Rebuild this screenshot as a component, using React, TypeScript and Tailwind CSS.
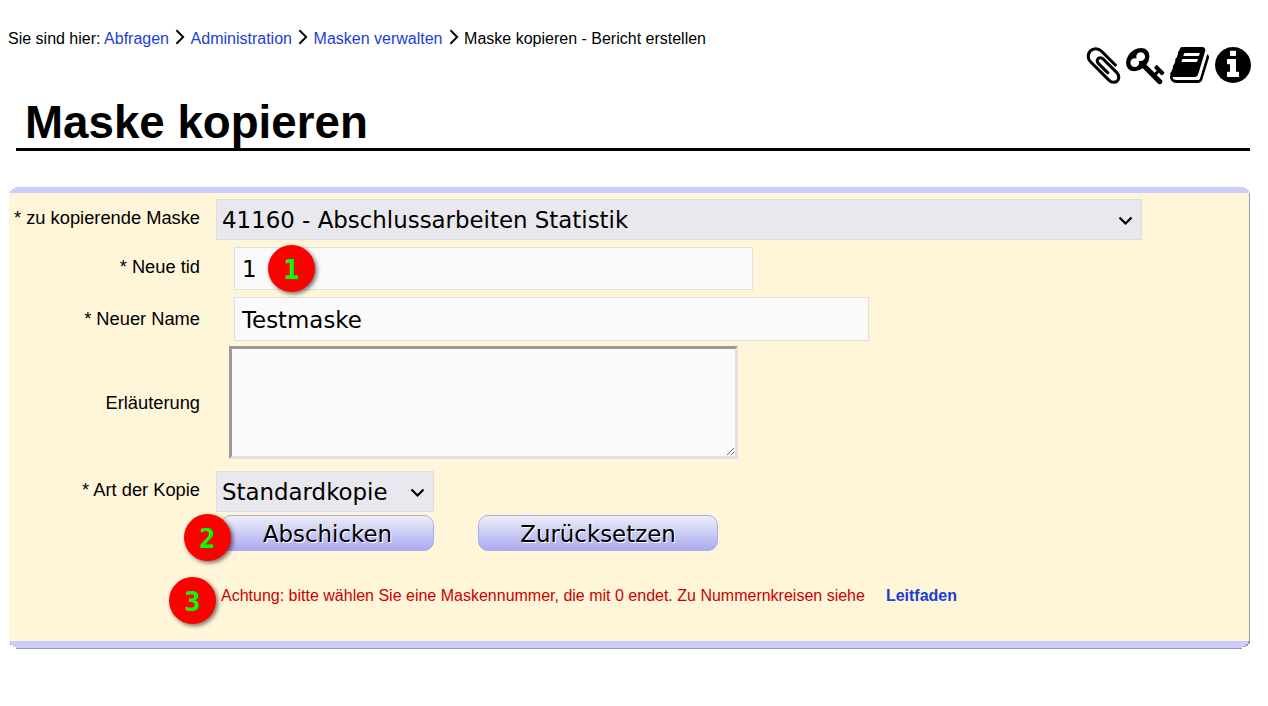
const ui = "font-['DejaVu_Sans',sans-serif] text-[22.9px] leading-normal text-black";

function Chevron() {
  return (
    <svg className="mx-[5px] inline-block h-[16px] w-[11.6px] align-[-1px]" viewBox="0 0 12 16" fill="none" stroke="#000" strokeWidth="2">
      <path d="M2.500 1l7 7-7 7" />
    </svg>
  );
}

function Badge({ n, className }: { n: number; className: string }) {
  return (
    <span
      className={`absolute z-10 flex h-[47px] w-[47px] items-center justify-center rounded-full bg-[#ff0000] pt-[3px] font-['DejaVu_Sans_Mono',monospace] text-[27px] font-bold text-[#00ff00] shadow-[2px_2px_4px_rgba(0,0,0,0.55)] ${className}`}
    >
      {n}
    </span>
  );
}

function Label({ children, className = "pb-[3px]" }: { children: string; className?: string }) {
  return <label className={`w-[207px] shrink-0 pr-[16px] text-right text-[18.3px] ${className}`}>{children}</label>;
}

function Select({ value, className }: { value: string; className: string }) {
  return (
    <div className={`relative ${className}`}>
      <select
        defaultValue={value}
        className={`h-full w-full appearance-none border border-[#dddddd] bg-[#e8e8ee] pl-[5px] pt-[2px] ${ui}`}
      >
        <option>{value}</option>
      </select>
      <svg className="pointer-events-none absolute right-[9px] top-[17px] h-[9px] w-[15px]" viewBox="0 0 15 9" fill="none" stroke="#000" strokeWidth="2.2">
        <path d="M1.500 1.500l6 6 6-6" />
      </svg>
    </div>
  );
}

const actionIcons = [
  {
    title: "Anhang",
    box: "h-[43px] w-[43px] mr-[1px]",
    d: "M1596 1385q0 117-79 196t-196 79q-135 0-235-100l-777-776q-113-115-113-271 0-159 110-270t269-111q158 0 273 113l605 606q10 10 10 22 0 16-30.5 46.5t-46.5 30.5q-13 0-23-10l-606-607q-79-77-181-77-106 0-179 75t-73 181q0 105 76 181l776 777q63 63 145 63 64 0 106-42t42-106q0-82-63-145l-581-581q-26-24-60-24-29 0-48 19t-19 48q0 32 25 59l410 410q10 10 10 22 0 16-31 47t-47 31q-12 0-22-10l-410-410q-63-61-63-149 0-82 57-139t139-57q88 0 149 63l581 581q100 98 100 235z",
  },
  {
    title: "Rechte",
    box: "h-[41px] w-[41px]",
    d: "M832 512q0-80-56-136t-136-56-136 56-56 136q0 42 19 83-41-19-83-19-80 0-136 56t-56 136 56 136 136 56 136-56 56-136q0-42-19-83 41 19 83 19 80 0 136-56t56-136zm851 704q0 17-49 66t-66 49q-9 0-28.500-16t-36.500-33-38.500-40-24.500-26l-96 96 220 220q28 28 28 68 0 42-39 81t-81 39q-40 0-68-28l-671-671q-176 131-365 131-163 0-265.500-102.500t-102.500-265.500q0-160 95-313t248-248 313-95q163 0 265.500 102.500t102.500 265.500q0 189-131 365l355 355 96-96q-3-3-26-24.500t-40-38.500-33-36.500-16-28.500q0-17 49-66t66-49q13 0 23 10 6 6 46 44.500t82 79.500 86.500 86 73 78 28.500 41z",
  },
  {
    title: "Handbuch",
    box: "h-[42px] w-[42px] ml-[3.5px]",
    d: "M1639 478q40 57 18 129l-275 906q-19 64-76.500 107.500t-122.500 43.500h-923q-77 0-148.500-53.500t-99.500-131.500q-24-67-2-127 0-4 3-27t4-37q1-8-3-21.500t-3-19.500q2-11 8-21t16.500-23.500 16.500-23.500q23-38 45-91.500t30-91.500q3-10 .5-30t-.5-28q3-11 17-28t17-23q21-36 42-92t25-90q1-9-2.500-32t.5-28q4-13 22-30.500t22-22.500q19-26 42.500-84.500t27.500-96.500q1-8-3-25.500t-2-26.500q2-8 9-18t18-23 17-21q8-12 16.500-30.500t15-35 16-36 19.500-32 26.500-23.500 36-11.500 47.500 5.500l-1 3q38-9 51-9h761q74 0 114 56t18 130l-274 906q-36 119-71.500 153.500t-128.500 34.500h-869q-27 0-38 15-11 16-1 43 24 70 144 70h923q29 0 56-15.500t35-41.500l300-987q7-22 5-57 38 15 59 43zm-1064 2q-4 13 2 22.500t20 9.500h608q13 0 25.500-9.500t16.500-22.500l21-64q4-13-2-22.500t-20-9.500h-608q-13 0-25.500 9.500t-16.500 22.500zm-83 256q-4 13 2 22.500t20 9.500h608q13 0 25.500-9.500t16.500-22.500l21-64q4-13-2-22.500t-20-9.500h-608q-13 0-25.500 9.500t-16.500 22.500z",
  },
  {
    title: "Info",
    box: "h-[42px] w-[42px]",
    d: "M1152 1376v-160q0-14-9-23t-23-9h-96v-512q0-14-9-23t-23-9h-320q-14 0-23 9t-9 23v160q0 14 9 23t23 9h96v320h-96q-14 0-23 9t-9 23v160q0 14 9 23t23 9h448q14 0 23-9t9-23zm-128-896v-160q0-14-9-23t-23-9h-192q-14 0-23 9t-9 23v160q0 14 9 23t23 9h192q14 0 23-9t9-23zm640 416q0 209-103 385.500t-279.500 279.500-385.500 103-385.500-103-279.500-279.500-103-385.500 103-385.500 279.500-279.500 385.500-103 385.500 103 279.500 279.500 103 385.500z",
  },
];

export default function App() {
  return (
    <div className="min-h-[706px] bg-white pt-[29px] font-['Liberation_Sans',Arial,sans-serif] text-[16px] leading-[18px] text-black">
      {/* Brotkrumen */}
      <div className="pl-[8px]">
        Sie sind hier: <a className="text-[#1a3fd6]">Abfragen</a>
        <Chevron />
        <a className="text-[#1a3fd6]">Administration</a>
        <Chevron />
        <a className="text-[#1a3fd6]">Masken verwalten</a>
        <Chevron />
        Maske kopieren - Bericht erstellen
      </div>

      <div className="flex h-[36px] items-center justify-end pb-[2px] pr-[14px]">
        {actionIcons.map((icon) => (
          <svg key={icon.title} className={`shrink-0 ${icon.box}`} viewBox="0 0 1792 1792" fill="#000" aria-label={icon.title}>
            <path d={icon.d} />
          </svg>
        ))}
      </div>

      <h1 className="ml-[16px] mr-[18px] mt-[14px] border-b-[3px] border-black pl-[9px] text-[45.7px] font-bold leading-[50px]">
        Maske kopieren
      </h1>

      {/* Formular */}
      <div className="ml-[9px] mr-[18px] mt-[36px]">
        <div className="h-[6px] bg-[#ccccff] [clip-path:polygon(6px_0,calc(100%-6px)_0,calc(100%-6px)_1px,calc(100%-3px)_1px,calc(100%-3px)_3px,calc(100%-1px)_3px,calc(100%-1px)_100%,0_100%,1px_4px,3px_4px,3px_2px,6px_2px)]" />
        <div className="border-r border-[#999999] bg-[#fff5d9] pt-[6px]">
          <div className="flex h-[41px] items-center">
            <Label>* zu kopierende Maske</Label>
            <Select value="41160 - Abschlussarbeiten Statistik" className="h-full w-[926px]" />
          </div>

          <div className="relative mt-[7px] flex h-[43px] items-center">
            <Label>* Neue tid</Label>
            <input
              defaultValue="1"
              className={`ml-[18px] h-full w-[519px] border border-[#e0e0e0] bg-[#fafafa] pl-[7px] pt-[1px] ${ui}`}
            />
            <Badge n={1} className="left-[259px] top-[-2px]" />
          </div>

          <div className="mt-[7px] flex h-[44px] items-center">
            <Label className="pb-[1px]">* Neuer Name</Label>
            <input
              defaultValue="Testmaske"
              className={`ml-[18px] h-full w-[635px] border border-[#e0e0e0] bg-[#fafafa] pl-[7px] pt-[1px] ${ui}`}
            />
          </div>

          <div className="mt-[5px] flex h-[113px] items-center">
            <Label className="pb-0">Erläuterung</Label>
            <textarea className="ml-[13px] h-full w-[509px] border-[3px] border-b-[#e0e0e0] border-l-[#999999] border-r-[#e0e0e0] border-t-[#999999] bg-[#fafafa]" />
          </div>

          <div className="mt-[12px] flex h-[41px] items-center">
            <Label>* Art der Kopie</Label>
            <Select value="Standardkopie" className="h-full w-[218px]" />
          </div>

          <div className="relative mt-[3px] flex h-[36px] pl-[212px]">
            <Badge n={2} className="left-[175px] top-[-1px]" />
            <button className={`h-full w-[213px] rounded-[10px] border border-[#aaaaee] bg-gradient-to-b from-[#eeeef6] to-[#aaaaf0] pt-[1px] [text-shadow:1px_1px_0_#fff] ${ui}`}>
              Abschicken
            </button>
            <button className={`ml-[44px] h-full w-[240px] rounded-[10px] border border-[#aaaaee] bg-gradient-to-b from-[#eeeef6] to-[#aaaaf0] pt-[1px] [text-shadow:1px_1px_0_#fff] ${ui}`}>
              Zurücksetzen
            </button>
          </div>

          <div className="relative mt-[36px] flex pb-[36px] pl-[212px] text-[#cc0000]">
            <Badge n={3} className="left-[160px] top-[-10px]" />
            <span>Achtung: bitte wählen Sie eine Maskennummer, die mit 0 endet. Zu Nummernkreisen siehe</span>
            <a className="ml-[21px] font-bold text-[#1a3fd6]">Leitfaden</a>
          </div>
        </div>
        <div className="h-[8px] bg-[#999999] [clip-path:polygon(1px_0,100%_0,100%_3px,calc(100%-2px)_3px,calc(100%-2px)_5px,calc(100%-4px)_5px,calc(100%-4px)_6px,calc(100%-8px)_6px,calc(100%-8px)_100%,7px_100%,7px_6px,4px_6px,4px_4px,1px_4px)]">
          <div className="h-[7px] bg-[#ccccff] [clip-path:polygon(1px_0,calc(100%-2px)_0,calc(100%-2px)_3px,calc(100%-4px)_3px,calc(100%-4px)_5px,calc(100%-6px)_5px,calc(100%-6px)_100%,4px_100%,4px_5px,2px_5px)]" />
        </div>
      </div>
    </div>
  );
}
